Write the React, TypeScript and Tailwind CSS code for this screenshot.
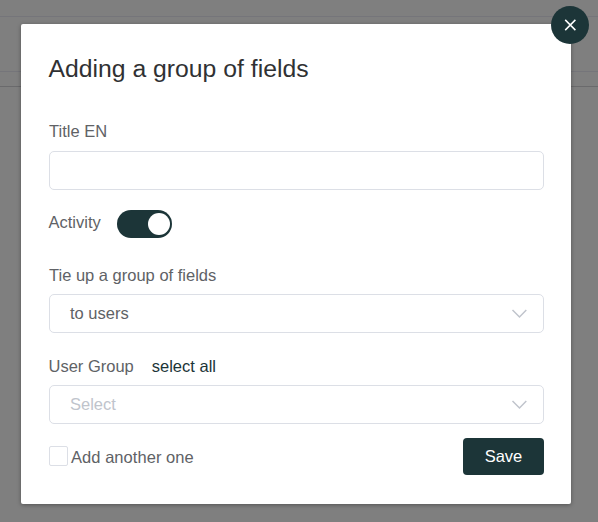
import React from "react";

const Chevron = () => (
  <svg className="w-4 h-4 text-[#c0c4cc]" viewBox="0 0 16 16" fill="none" stroke="currentColor" strokeWidth="1.5">
    <path d="M1.5 4 8.5 11 15.3 4" />
  </svg>
);

const SelectBox = ({ text, placeholder }: { text: string; placeholder?: boolean }) => (
  <div className="flex items-center justify-between w-full h-[39px] pl-5 pr-4 border border-[#dcdfe6] rounded-[5px]">
    <span className={placeholder ? "mb-0.5 text-[#c0c4cc]" : "mb-0.5"}>{text}</span>
    <Chevron />
  </div>
);

export default function App() {
  return (
    <div className="relative w-full h-[522px] overflow-hidden bg-[#7f7f7f] font-['Liberation_Sans',Arial,sans-serif] text-[16.5px] leading-5 text-[#606266]">
      {/* Page behind the overlay */}
      <div className="h-[17px] border-b border-[#75757a]" />
      <div className="h-[55px] border-b border-[#75757a]" />
      <div className="h-[15px] border-b border-[#6a6a6c]" />

      {/* Dialog */}
      <div className="absolute left-[21px] top-6 w-[550px] h-[480px] bg-white rounded-[2px] shadow-[0_1px_4px_rgba(0,0,0,0.35)] pl-7 pr-[27px] pt-[30px]">
        <button className="absolute -right-[18px] -top-[18px] flex items-center justify-center w-[38px] h-[38px] rounded-full bg-[#1c3538] text-white">
          <svg className="w-3 h-3" viewBox="0 0 12 12" fill="none" stroke="currentColor" strokeWidth="1.5">
            <path d="M1.2.9l10.2 10.2M11.4.9 1.2 11.1" />
          </svg>
        </button>

        <h2 className="-ml-[0.5px] text-[24.75px] leading-[30px] text-[#303133]">Adding a group of fields</h2>

        <div className="mt-[37px]">
          <label className="block">Title EN</label>
          <input className="block w-full h-[39px] mt-[10px] border border-[#dcdfe6] rounded-[5px]" />
        </div>

        <div className="flex items-start mt-5">
          <span className="w-[52px] mt-[2px] -ml-[0.5px]">Activity</span>
          <span className="flex justify-end items-center w-[55px] h-7 ml-[16.5px] pr-[2px] rounded-full bg-[#1c3538]">
            <span className="w-[22px] h-[22px] rounded-full bg-white" />
          </span>
        </div>

        <div className="mt-[27px]">
          <label className="block mb-[9px]">Tie up a group of fields</label>
          <SelectBox text="to users" />
        </div>

        <div className="mt-[23px]">
          <div className="flex gap-[18px] mb-[9px] -ml-[0.5px]">
            <label>User Group</label>
            <span className="text-[#1c3538]">select all</span>
          </div>
          <SelectBox text="Select" placeholder />
        </div>

        <div className="flex items-start justify-between mt-[14px]">
          <label className="flex items-start gap-[3px] mt-2">
            <span className="w-[19px] h-5 border border-[#dcdfe6] rounded-[2px]" />
            <span className="mt-px tracking-[0.05px]">Add another one</span>
          </label>
          <button className="w-[81px] h-[37px] pb-0.5 rounded-[4px] bg-[#1c3538] text-white">Save</button>
        </div>
      </div>
    </div>
  );
}
